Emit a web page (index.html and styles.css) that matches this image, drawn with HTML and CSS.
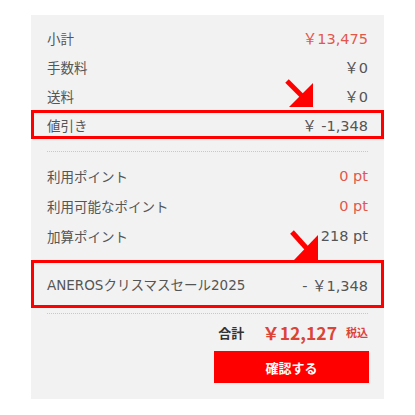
FILE: index.html
```html
<!DOCTYPE html>
<html lang="ja">
<head>
    <meta charset="UTF-8">
    <meta name="viewport" content="width=device-width, initial-scale=1.0">
    <title>注文内容の確認</title>
    <link rel="stylesheet" href="styles.css">
</head>
<body>
    <!-- Order Summary -->
    <div class="summary">
        <div class="group prices">
            <div class="row">
                <span>小計</span>
                <span class="value red">￥13,475</span>
            </div>
            <div class="row">
                <span>手数料</span>
                <span class="value">￥0</span>
            </div>
            <div class="row">
                <span>送料</span>
                <span class="value">￥0</span>
            </div>
            <div class="row boxed">
                <span>値引き</span>
                <span class="value">￥ -1,348</span>
            </div>
        </div>

        <div class="divider"></div>

        <div class="group points">
            <div class="row">
                <span>利用ポイント</span>
                <span class="value red">0 pt</span>
            </div>
            <div class="row">
                <span>利用可能なポイント</span>
                <span class="value red">0 pt</span>
            </div>
            <div class="row">
                <span>加算ポイント</span>
                <span class="value">218 pt</span>
            </div>
            <div class="row boxed coupon">
                <span>ANEROSクリスマスセール2025</span>
                <span class="value">- ￥1,348</span>
            </div>
        </div>

        <div class="divider"></div>

        <div class="total">
            <span class="total-label">合計</span>
            <span class="total-price">￥12,127</span>
            <span class="tax">税込</span>
        </div>

        <div class="actions">
            <button type="button" class="confirm-btn">確認する</button>
        </div>

        <!-- Annotation arrows -->
        <svg class="arrow arrow-discount" width="30" height="30" viewBox="0 0 30 30">
            <line x1="2" y1="2" x2="20" y2="20" stroke="#ff0000" stroke-width="5"/>
            <polygon points="28,4 28,28 4,28" fill="#ff0000"/>
        </svg>
        <svg class="arrow arrow-coupon" width="30" height="32" viewBox="0 0 30 32">
            <line x1="2" y1="2" x2="20" y2="22" stroke="#ff0000" stroke-width="5"/>
            <polygon points="28,5 28,30 4,30" fill="#ff0000"/>
        </svg>
    </div>
</body>
</html>
```

FILE: styles.css
```css
/* General Styling */
body {
    font-family: "DejaVu Sans", "Noto Sans CJK JP", sans-serif;
    margin: 0;
    padding: 15px 0 0 31px;
    background-color: #ffffff;
    color: #555555;
}

/* Summary Panel */
.summary {
    position: relative;
    width: 353px;
    background: #f2f2f2;
    padding: 8px 0 16px;
}

.row {
    display: flex;
    justify-content: space-between;
    align-items: center;
    height: 29px;
    padding: 0 16px;
    font-size: 13.5px;
}

.points .row {
    height: 30px;
}

.points {
    padding-top: 9px;
}

.value {
    font-size: 14.5px;
}

.red {
    color: #e2574c;
}

/* Highlighted rows */
.boxed {
    border: 3px solid #ff0000;
    padding: 0 13px;
    height: 23px;
}

.points .coupon {
    height: 42px;
    margin-top: 9px;
}

.divider {
    border-top: 1px dotted #c8c8c8;
    margin: 12px 16px 0;
}

.points + .divider {
    margin-top: 5px;
}

/* Total */
.total {
    display: flex;
    justify-content: flex-end;
    align-items: center;
    height: 22px;
    margin-top: 7px;
    padding: 0 16px;
}

.total-label {
    font-size: 13px;
    font-weight: bold;
    color: #333333;
    margin-right: 18px;
}

.total-price {
    font-family: "Noto Sans CJK JP", sans-serif;
    font-size: 17.5px;
    font-weight: bold;
    color: #dd4438;
    margin-right: 9px;
}

.tax {
    font-size: 11px;
    font-weight: bold;
    color: #dd4438;
}

.actions {
    display: flex;
    justify-content: flex-end;
    padding: 0 15px;
    margin-top: 8px;
}

.confirm-btn {
    width: 155px;
    height: 32px;
    background-color: #ff0000;
    color: white;
    border: none;
    font-family: inherit;
    font-size: 13px;
    font-weight: bold;
    cursor: pointer;
}

/* Arrows */
.arrow {
    position: absolute;
}

.arrow-discount {
    left: 254px;
    top: 64px;
}

.arrow-coupon {
    left: 259px;
    top: 215px;
}
```
